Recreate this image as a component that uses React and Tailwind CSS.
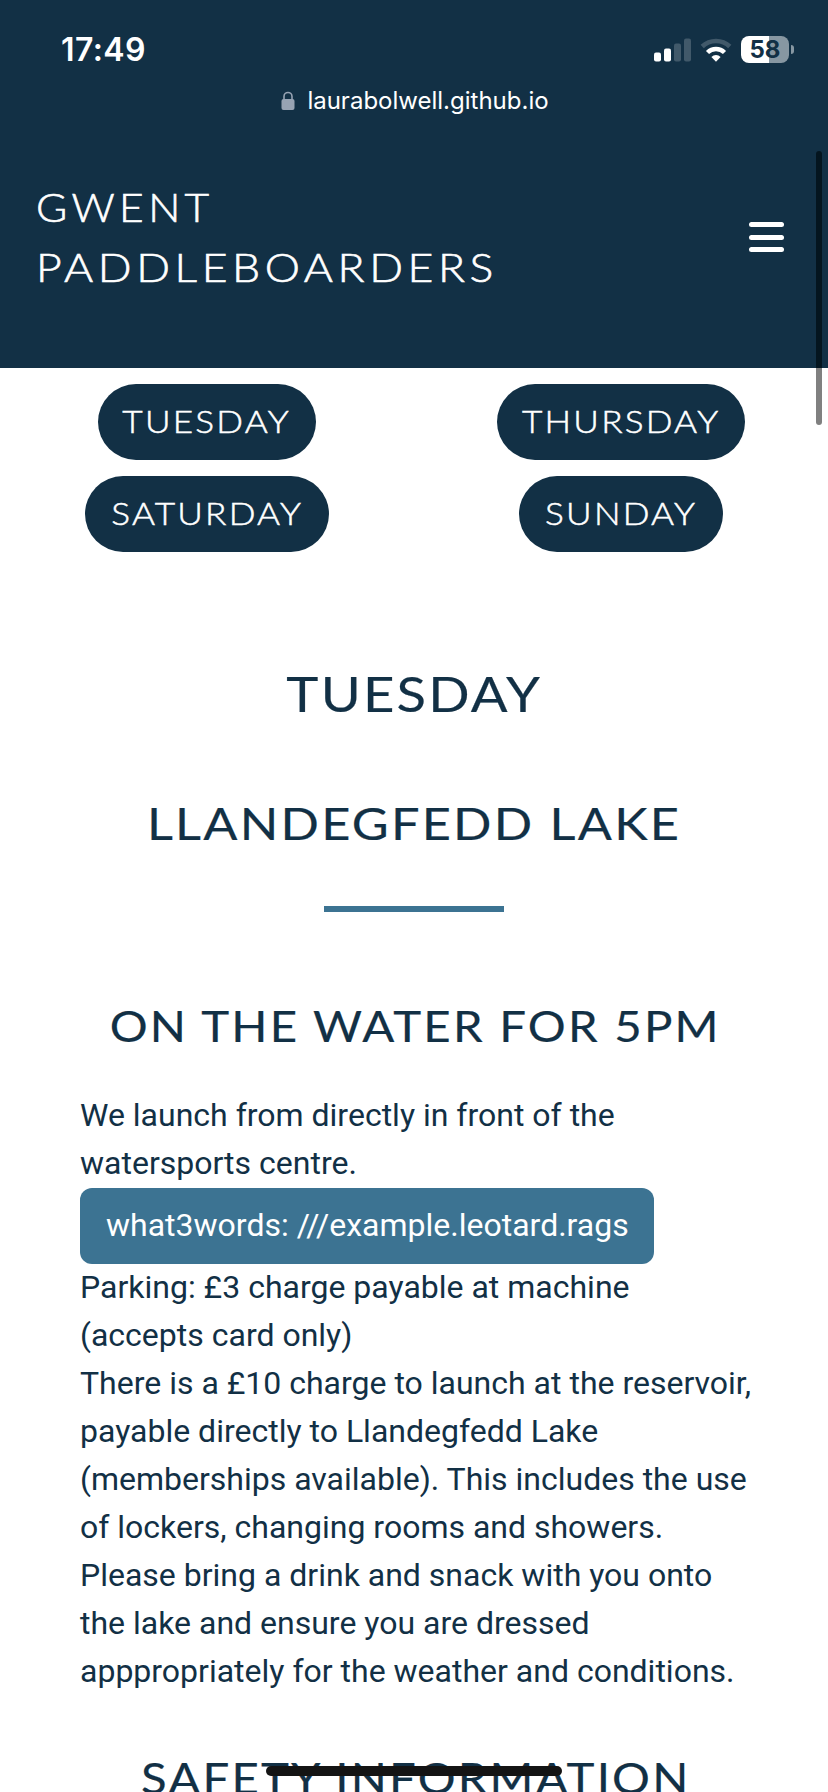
const days = [
  { name: 'TUESDAY', width: 'w-[218px]' },
  { name: 'THURSDAY', width: 'w-[248px]' },
  { name: 'SATURDAY', width: 'w-[244px]' },
  { name: 'SUNDAY', width: 'w-[204px]' },
];

function StatusIcons() {
  return (
    <div className="flex items-center">
      <svg className="h-6 w-[37px]" viewBox="0 0 37 24" fill="#fff">
        <rect x="0" y="14.5" width="7" height="9" rx="2" />
        <rect x="10" y="10.5" width="7" height="13" rx="2" />
        <rect x="20" y="5.5" width="7" height="18" rx="2" opacity=".2" />
        <rect x="30" y="0.5" width="7" height="23" rx="2" opacity=".2" />
      </svg>
      <svg className="ml-[9px] h-6 w-8" viewBox="0 0 32 24" fill="none">
        <path d="M2.2 8.5A20 20 0 0 1 29.8 8.5" stroke="#fff" strokeOpacity=".2" strokeWidth="4.6" />
        <path d="M7.5 14.5A12 12 0 0 1 24.5 14.5" stroke="#fff" strokeWidth="4.4" />
        <path d="M16 23.8L11.4 18.9A6.4 6.4 0 0 1 20.6 18.9Z" fill="#fff" />
      </svg>
      <div className="ml-[9px] flex h-[27px] w-12 items-center justify-center rounded-[8px] bg-[linear-gradient(90deg,#fff_58%,#8797a2_58%)] text-[24px] leading-none font-bold text-[#123045]">
        58
      </div>
      <div className="ml-[2px] h-[9px] w-[3px] rounded-r-full bg-[#8797a2]" />
    </div>
  );
}

export default function App() {
  return (
    <div className="relative h-[1792px] w-[828px] overflow-hidden bg-white font-['Roboto',sans-serif] text-[#123045]">
      <header className="flex h-[368px] flex-col bg-[#123045] text-white">
        <div className="flex h-[72px] items-center justify-between pt-[27px] pr-[34px] pl-[61px] font-['Inter',sans-serif]">
          <span className="text-[32px] leading-none font-semibold tracking-[0.4px]">17:49</span>
          <StatusIcons />
        </div>
        <div className="flex h-14 items-center justify-center pt-[2px] pl-[2px] font-['Inter',sans-serif]">
          <svg className="mr-3 -mt-[2px] h-[19px] w-[14px]" viewBox="0 0 14 19" fill="none">
            <rect x="0.5" y="8" width="13" height="11" rx="2" fill="#97a3b3" />
            <path d="M3 9V5.5a4 4 0 0 1 8 0V9" stroke="#97a3b3" strokeWidth="1.6" />
          </svg>
          <span className="text-[24px] leading-none">laurabolwell.github.io</span>
        </div>
        <div className="flex items-center justify-between pt-[49px] pr-11 pl-9">
          <h1 className="w-min font-['Lato',sans-serif] text-[39px] leading-[60px] font-light tracking-[4px] [-webkit-text-stroke:0.6px_white]">
            <span className="block origin-left scale-x-[1.09]">GWENT</span>
            <span className="block origin-left scale-x-[1.141]">PADDLEBOARDERS</span>
          </h1>
          <button className="flex w-[35px] flex-col gap-[7.5px]" aria-label="Menu">
            <span className="h-[5px] rounded-full bg-white" />
            <span className="h-[5px] rounded-full bg-white" />
            <span className="h-[5px] rounded-full bg-white" />
          </button>
        </div>
      </header>

      <nav className="grid grid-cols-2 justify-items-center gap-y-4 pt-4">
        {days.map((d) => (
          <a key={d.name} className={`${d.width} flex h-[76px] items-center justify-center rounded-full bg-[#123045] pb-[3px] font-['Lato',sans-serif] text-[32px] leading-none font-light text-white [-webkit-text-stroke:0.5px_white]`}>
            <span className="scale-x-[1.1] tracking-[2px]">{d.name}</span>
          </a>
        ))}
      </nav>

      <main className="font-['Lato',sans-serif]">
        <h2 className="pt-[111px] text-center text-[49px] leading-[60px] font-normal tracking-[2px] [-webkit-text-stroke:0.2px_#123045]">
          <span className="inline-block scale-x-[1.11]">TUESDAY</span>
        </h2>
        <h3 className="pt-[70px] text-center text-[45px] leading-[60px] font-normal tracking-[2px] [-webkit-text-stroke:0.2px_#123045]">
          <span className="inline-block scale-x-[1.122]">LLANDEGFEDD LAKE</span>
        </h3>
        <hr className="mx-auto mt-[53px] h-[6px] w-[180px] border-0 bg-[#3c7392]" />
        <h4 className="pt-[84px] pl-[3px] text-center text-[43px] leading-[60px] font-normal tracking-[2px] [-webkit-text-stroke:0.2px_#123045]">
          <span className="inline-block scale-x-[1.102]">ON THE WATER FOR 5PM</span>
        </h4>
        <div className="mt-[35px] pl-20 font-['Roboto',sans-serif] text-[32px] leading-[48px] whitespace-nowrap">
          <p>We launch from directly in front of the<br />watersports centre.</p>
          <a className="mt-px flex h-[76px] w-[574px] items-center rounded-xl bg-[#3c7392] pb-[2px] pl-[26px] text-white">
            what3words: ///example.leotard.rags
          </a>
          <p className="-mt-px">Parking: £3 charge payable at machine<br />(accepts card only)</p>
          <p>
            There is a £10 charge to launch at the reservoir,<br />
            payable directly to Llandegfedd Lake<br />
            (memberships available). This includes the use<br />
            of lockers, changing rooms and showers.
          </p>
          <p>
            Please bring a drink and snack with you onto<br />
            the lake and ensure you are dressed<br />
            apppropriately for the weather and conditions.
          </p>
        </div>
        <h4 className="pt-[53px] pl-[3px] text-center text-[43px] leading-[60px] font-normal tracking-[2px] [-webkit-text-stroke:0.2px_#123045]">
          <span className="inline-block scale-x-[1.1]">SAFETY INFORMATION</span>
        </h4>
      </main>

      <div className="absolute top-[151px] right-[6px] h-[274px] w-[6px] rounded-full bg-[linear-gradient(#04151f_217px,#808080_217px)]" />
      <div className="absolute top-[1766px] left-[266px] h-[10px] w-[296px] rounded-full bg-[#141414]" />
    </div>
  );
}
